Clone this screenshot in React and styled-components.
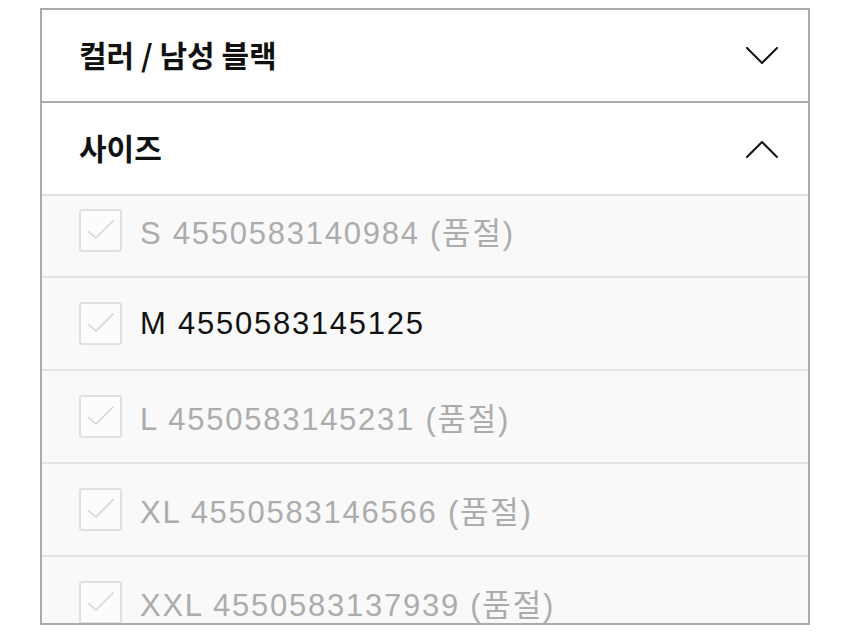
import styled, { createGlobalStyle } from "styled-components";

const GlobalStyle = createGlobalStyle`
    body{
        margin: 0;
        background: #fff;
        font-family: "Liberation Sans", "Noto Sans CJK KR", sans-serif;
    }
`;

const sizes = [
    { label: "S 4550583140984", soldOut: true },
    { label: "M 4550583145125", soldOut: false },
    { label: "L 4550583145231", soldOut: true },
    { label: "XL 4550583146566", soldOut: true },
    { label: "XXL 4550583137939", soldOut: true },
];

const Chevron = ({ up }) => (
    <svg width="32" height="18" viewBox="0 0 32 18" fill="none">
        <polyline
            points={up ? "1,17 16,2 31,17" : "1,1 16,16 31,1"}
            stroke="#111"
            strokeWidth="2"
            strokeLinecap="round"
            strokeLinejoin="round"
        />
    </svg>
);

const App = () => {
    return (
        <>
            <GlobalStyle />
            <Panel>
                <Header>
                    <Title>컬러 / 남성 블랙</Title>
                    <Chevron />
                </Header>
                <Header $open>
                    <Title>사이즈</Title>
                    <Chevron up />
                </Header>
                <ListViewport>
                    <List>
                        {sizes.map((s) => (
                            <Row key={s.label}>
                                <CheckBox>
                                    <svg width="39" height="39" viewBox="0 0 39 39" fill="none">
                                        <polyline
                                            points="7.5,20.5 15,27 32,10"
                                            stroke="#d4d4d4"
                                            strokeWidth="1.6"
                                            strokeLinecap="round"
                                            strokeLinejoin="round"
                                        />
                                    </svg>
                                </CheckBox>
                                <Label $soldOut={s.soldOut}>
                                    {s.label}
                                    {s.soldOut && " (품절)"}
                                </Label>
                            </Row>
                        ))}
                    </List>
                </ListViewport>
            </Panel>
        </>
    );
};

export default App;

const Panel = styled.div`
    margin: 8px 0 0 40px;
    width: 766px;
    height: 613px;
    border: 2px solid #ababab;
    display: flex;
    flex-direction: column;
    background: #fff;
`;

const Header = styled.div`
    flex: none;
    height: 91px;
    display: flex;
    align-items: center;
    justify-content: space-between;
    padding: 0 30px 0 37px;
    border-bottom: 2px solid ${(p) => (p.$open ? "#e2e2e2" : "#ababab")};
    svg{
        display: block;
    }
`;

const Title = styled.h2`
    margin: 0;
    margin-top: -4px;
    font-size: 30px;
    font-weight: 700;
    color: #111;
    font-family: "Noto Sans CJK KR", "Liberation Sans", sans-serif;
    letter-spacing: 0;
`;

const ListViewport = styled.div`
    flex: 1;
    overflow: hidden;
    background: #f9f9f9;
`;

const List = styled.div`
    margin-top: -11px;
`;

const Row = styled.div`
    height: 91px;
    display: flex;
    align-items: center;
    gap: 18px;
    padding-left: 37px;
    border-bottom: 2px solid #e4e4e4;
`;

const CheckBox = styled.div`
    width: 39px;
    height: 39px;
    flex: none;
    border: 2px solid #e0e0e0;
    border-radius: 3px;
    background: #fcfcfc;
    svg{
        display: block;
    }
`;

const Label = styled.span`
    font-size: 31px;
    letter-spacing: 1.75px;
    color: ${(p) => (p.$soldOut ? "#acacac" : "#111")};
`;
